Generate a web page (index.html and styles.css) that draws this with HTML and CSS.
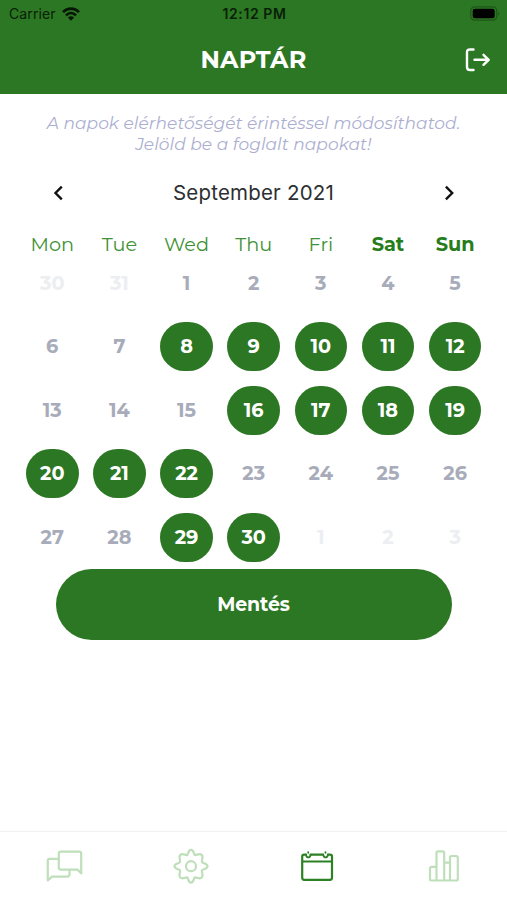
FILE: index.html
```html
<!DOCTYPE html>
<html lang="hu">
<head>
<meta charset="utf-8">
<meta name="viewport" content="width=device-width, initial-scale=1">
<title>Naptár</title>
<link rel="stylesheet" href="styles.css">
</head>
<body>
<div class="app">
  <header class="header">
    <div class="status">
      <div class="carrier"><span>Carrier</span>
        <svg width="18" height="14" viewBox="0 0 18 14" fill="none" stroke="#061606" stroke-width="2.700"><path d="M1 5.1C5.5.4 12.500.4 17 5.100M4 8.400C7 5.400 11 5.400 14 8.400"/><path d="M9 13.700L5.900 10.600Q9 8 12.100 10.600Z" fill="#061606" stroke="none"/></svg>
      </div>
      <div class="clock">12:12 PM</div>
      <svg class="battery" width="30" height="15" viewBox="0 0 30 15"><rect x=".8" y=".8" width="26" height="13.400" rx="4" fill="none" stroke="#1d5718" stroke-width="1.200"/><rect x="2.700" y="2.700" width="22" height="9.600" rx="2.300" fill="#000"/><path d="M28 5.200q1.600 2.300 0 4.600z" fill="#1d5718"/></svg>
    </div>
    <div class="titlebar">
      <h1>NAPTÁR</h1>
      <svg class="logout" width="26" height="24" viewBox="0 0 26 24" fill="none" stroke="#fff" stroke-width="2.400" stroke-linecap="round" stroke-linejoin="round"><path d="M8.500 1.500H5Q2 1.500 2 4.500V19Q2 22 5 22H8.500M9.500 11.800H23.500M18.500 6.800L23.700 11.800L18.500 16.800"/></svg>
    </div>
  </header>
  <main class="main">
    <p class="hint">A napok elérhetőségét érintéssel módosíthatod.<br>Jelöld be a foglalt napokat!</p>
    <div class="month">
      <svg width="10" height="16" viewBox="0 0 10 16" fill="none" stroke="#111" stroke-width="2.400"><path d="M8.800 1.700L2.500 8L8.800 14.300"/></svg>
      <span>September 2021</span>
      <svg width="10" height="16" viewBox="0 0 10 16" fill="none" stroke="#111" stroke-width="2.400"><path d="M1.900 1.700L8.200 8L1.900 14.300"/></svg>
    </div>
    <div class="weekdays"><span>Mon</span><span>Tue</span><span>Wed</span><span>Thu</span><span>Fri</span><span class="weekend">Sat</span><span class="weekend">Sun</span></div>
    <div class="days">
      <span class="day out">30</span><span class="day out">31</span><span class="day">1</span><span class="day">2</span><span class="day">3</span><span class="day">4</span><span class="day">5</span>
      <span class="day">6</span><span class="day">7</span><span class="day busy">8</span><span class="day busy">9</span><span class="day busy">10</span><span class="day busy">11</span><span class="day busy">12</span>
      <span class="day">13</span><span class="day">14</span><span class="day">15</span><span class="day busy">16</span><span class="day busy">17</span><span class="day busy">18</span><span class="day busy">19</span>
      <span class="day busy">20</span><span class="day busy">21</span><span class="day busy">22</span><span class="day">23</span><span class="day">24</span><span class="day">25</span><span class="day">26</span>
      <span class="day">27</span><span class="day">28</span><span class="day busy">29</span><span class="day busy">30</span><span class="day out">1</span><span class="day out">2</span><span class="day out">3</span>
    </div>
    <button class="save">Mentés</button>
  </main>
  <nav class="tabs">
    <svg width="40" height="40" viewBox="0 0 40 40"><path d="M15 12.800H5.500Q3.800 12.800 3.800 14.500V34.500L8 30.600H23.500Q25.500 30.600 25.500 28.600V23.600M16.700 5.600H35Q37.200 5.600 37.200 7.600V27.300L33.500 23.600H16.700Q14.800 23.600 14.800 21.600V7.600Q14.800 5.600 16.700 5.600Z"/></svg>
    <svg width="40" height="40" viewBox="0 0 40 40"><path d="M16.300 9C17.500 8 17 3.800 20 3.800S22.500 8 23.700 9C25.200 9.700 28.300 6.600 30.700 8.900S30 14.200 31 16C31.700 17.400 36.500 17.200 36.500 20.200S31.700 23 31 24.400C30 26.200 33 29.200 30.700 31.500S25.200 30.700 23.700 31.400C22.500 32.400 23 36.600 20 36.600S17.500 32.400 16.300 31.400C14.800 30.700 11.700 33.800 9.300 31.500S10 26.200 9 24.400C8.300 23 3.500 23.200 3.500 20.200S8.300 17.400 9 16C10 14.200 7 11.200 9.300 8.900S14.800 9.700 16.300 9Z"/><circle cx="20" cy="20.200" r="5"/></svg>
    <svg class="active" width="40" height="40" viewBox="0 0 40 40"><path d="M9 8.700H7.200Q5.200 8.700 5.200 10.700V31.800Q5.200 33.800 7.200 33.800H33Q35 33.800 35 31.800V10.700Q35 8.700 33 8.700H31M13.500 8.700H26M5.200 15.500H35"/><path class="ring" d="M11.200 6.100V6.800M28.500 6.100V6.800M8.900 8.700Q9.500 11.400 11.300 11.400T13.700 8.700M26.200 8.700Q26.800 11.400 28.600 11.400T31 8.700"/></svg>
    <svg width="40" height="40" viewBox="0 0 40 40"><path d="M12.500 34.500H7.200Q6 34.500 6 33.300V22.600Q6 20.800 7.800 20.800H12.500M12.500 34.500V7Q12.500 5.300 14.200 5.300H18.500Q20.200 5.300 20.200 7V34.500ZM20.200 16.700H25.500M20.200 34.500H26V11.600Q26 10 27.600 10H32Q33.800 10 33.800 11.800V33Q33.800 34.500 32.300 34.500H26"/></svg>
  </nav>
</div>
</body>
</html>
```
FILE: styles.css
```css
* { box-sizing: border-box; }
body { margin: 0; background: #fff; font-family: Montserrat, Inter, sans-serif; }
.app { height: 900px; width: 507px; display: flex; flex-direction: column; overflow: hidden; }
.header { height: 94px; background: #2c7723; flex: none; }
.status { height: 28px; display: grid; grid-template-columns: 1fr auto 1fr; align-items: center; padding: 0 7px 1px 9px; font: 14px/20px Inter, sans-serif; color: #092008; }
.carrier { display: flex; align-items: center; gap: 6px; letter-spacing: .1px; }
.clock { font-weight: 600; letter-spacing: .6px; }
.battery { justify-self: end; }
.titlebar { height: 64px; display: grid; grid-template-columns: 1fr auto 1fr; align-items: center; padding: 0 16px; }
h1 { grid-column: 2; margin: 0; font-size: 24px; line-height: 30px; font-weight: 700; color: #fff; letter-spacing: .3px; }
.logout { justify-self: end; }
.main { flex: 1; display: flex; flex-direction: column; }
.hint { margin: 19px 0 0; text-align: center; font-size: 17px; line-height: 20.5px; font-style: italic; font-weight: 400; color: #abaed0; white-space: nowrap; letter-spacing: .06px; }
.month { display: flex; justify-content: space-between; align-items: center; height: 30px; margin-top: 24px; padding: 0 52.500px; font: 20.5px/30px Inter, sans-serif; color: #2d2f31; }
.month span { letter-spacing: .2px; }
.weekdays, .days { display: grid; grid-template-columns: repeat(7, 67.15px); justify-content: center; text-align: center; padding-left: .4px; }
.weekdays { margin-top: 24px; height: 24px; font-size: 19.3px; line-height: 24px; color: #3f9237; font-weight: 400; }
.weekdays .weekend { font-weight: 700; color: #257d1b; }
.days { margin-top: 2.5px; row-gap: 14.5px; justify-items: center; }
.day { width: 52.600px; height: 49px; border-radius: 24.5px; font-size: 19.3px; line-height: 49px; font-weight: 700; color: #a8acba; }
.day.out { color: #eceef1; }
.day.busy { background: #2c7723; color: #fff; }
.save { width: 396px; height: 71px; margin: 7.5px auto 0; border: 0; border-radius: 36px; background: #2c7723; color: #fff; font: 700 19px Montserrat, Inter, sans-serif; letter-spacing: -.1px; }
.tabs { height: 69px; flex: none; border-top: 1px solid #f1f1f1; display: grid; grid-template-columns: repeat(4, 1fr); justify-items: center; padding: 14px 0 0 1px; }
.tabs svg { fill: none; stroke: #bfdfbb; stroke-width: 2.200; stroke-linejoin: round; stroke-linecap: round; }
.tabs .active { stroke: #2c8125; }
.tabs .ring { stroke-width: 1.800; }
```
